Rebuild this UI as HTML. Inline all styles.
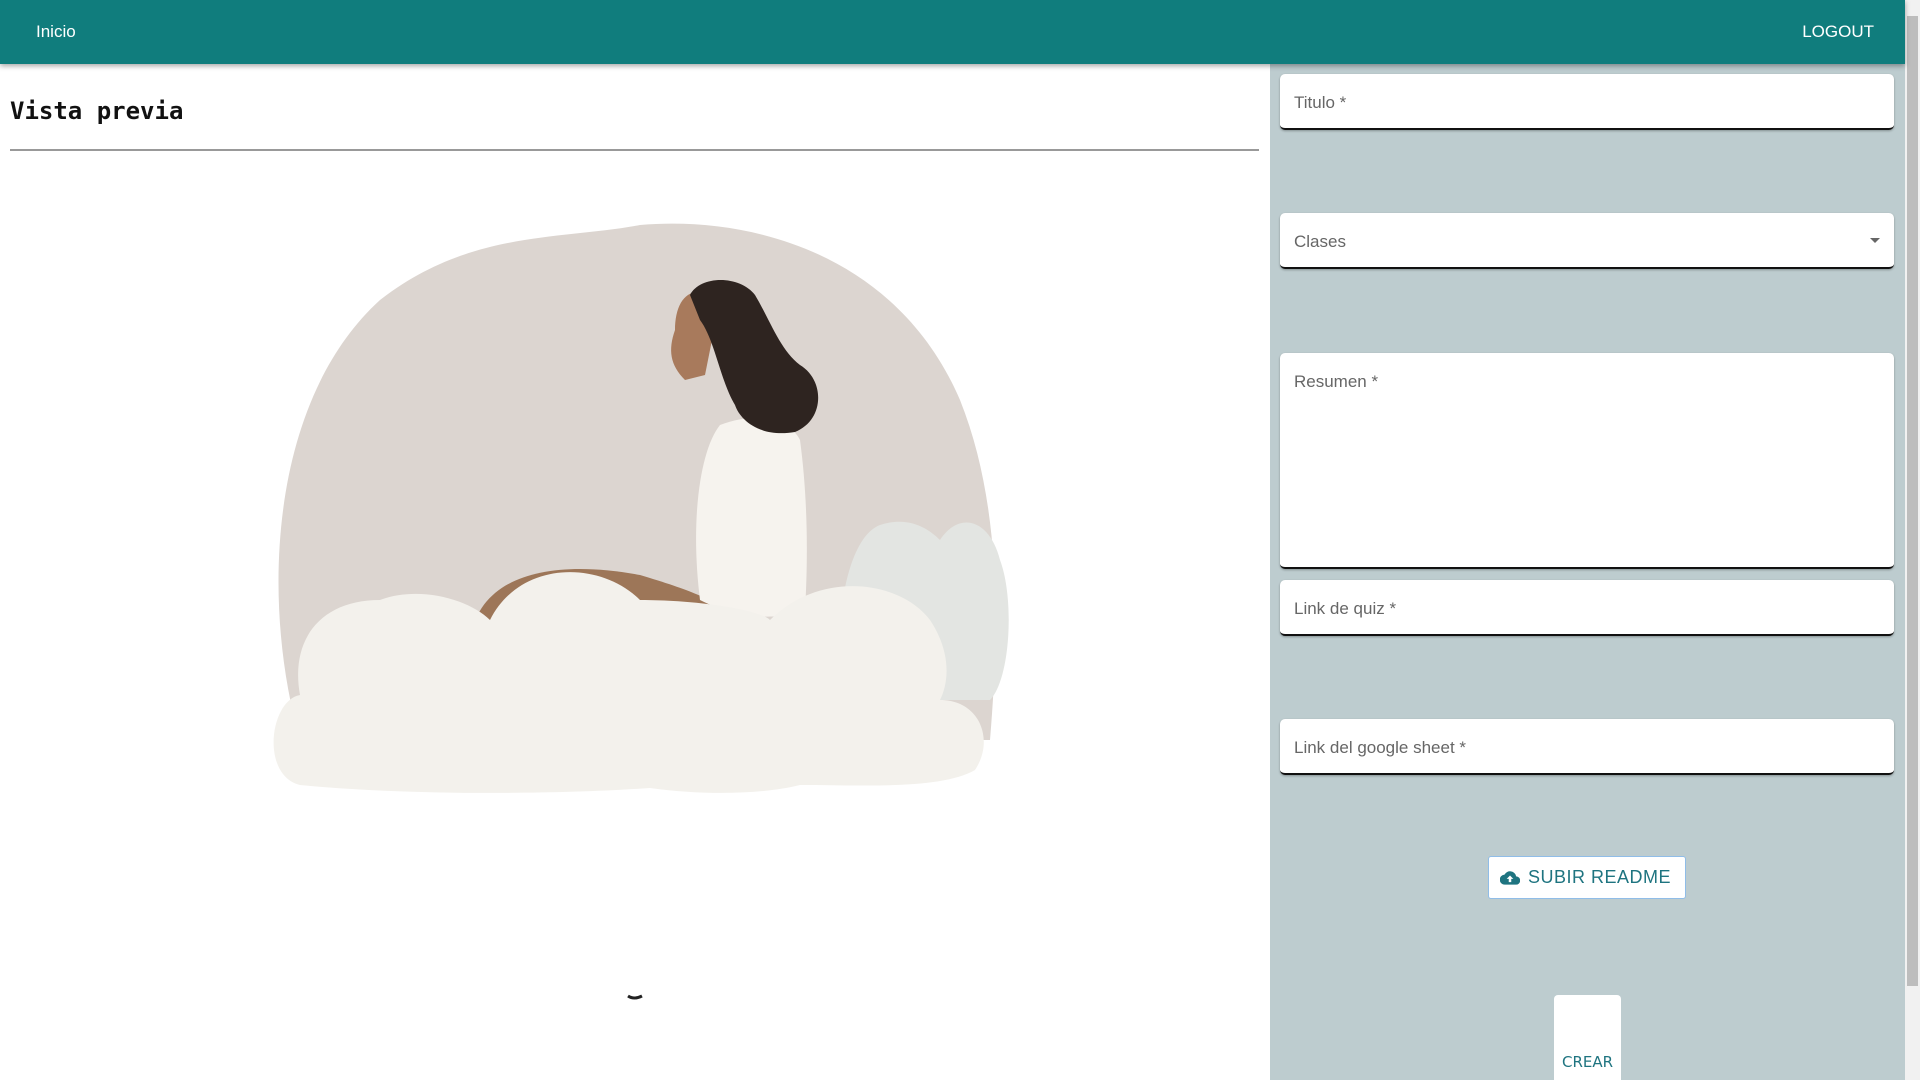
<!DOCTYPE html>
<html><head><meta charset="utf-8"><style>
*{box-sizing:border-box;margin:0;padding:0}
body{width:1920px;height:1080px;overflow:hidden;background:#fff;font-family:"Liberation Sans",sans-serif;position:relative}
.hdr{position:absolute;left:0;top:0;width:1905px;height:64px;background:#107d7d;box-shadow:0 2px 5px rgba(0,0,0,.35);z-index:2;color:#fff;font-size:17px}
.hdr .a{position:absolute;left:36px;top:22px}
.hdr .b{position:absolute;right:31px;top:22px}
.side{position:absolute;left:1270px;top:64px;width:635px;height:1016px;background:#bdcccf}
.sb{position:absolute;left:1905px;top:0;width:15px;height:1080px;background:#f1f1f1}
.sb .t{position:absolute;left:2px;top:16px;width:11px;height:970px;background:#bdbdbd}
.f{position:absolute;left:1280px;width:614px;background:#fff;border-radius:5px;border-bottom:2px solid #111;box-shadow:0 1px 2px rgba(0,0,0,.3);color:#666;font-size:17px;padding:0 14px}
h1{position:absolute;left:10px;top:97px;font-family:"DejaVu Sans Mono",monospace;font-size:24px;font-weight:bold;color:#111}
.hr{position:absolute;left:10px;top:149px;width:1249px;height:2px;background:#999}
.btn{position:absolute;left:1488px;top:856px;width:198px;height:43px;background:#fff;border:1px solid #90bde8;border-radius:3px;color:#1e7480;font-size:18px;letter-spacing:.5px}
.crear{position:absolute;left:1554px;top:995px;width:67px;height:85px;background:#fff;border-radius:4px 4px 0 0;color:#1e7480;text-align:center;padding-top:58px;font-family:"DejaVu Sans",sans-serif;font-size:15px}
</style></head><body>
<div class="hdr"><span class="a">Inicio</span><span class="b">LOGOUT</span></div>
<h1>Vista previa</h1>
<div class="hr"></div>
<svg style="position:absolute;left:0;top:0" width="1270" height="1080">
<path d="M300 740 C260 600 270 400 380 300 C470 230 560 240 640 225 C760 215 900 260 960 400 C1000 500 1000 620 990 740 Z" fill="#dcd5d0"/>
<path d="M850 700 C830 660 840 540 880 525 C910 515 930 530 940 540 C960 510 990 520 1000 560 C1015 600 1010 680 990 700 Z" fill="#e3e5e2"/>
<path d="M470 640 C480 570 560 560 640 575 C690 590 715 600 720 610 L700 640 Z" fill="#9d7658"/>
<path d="M700 600 C690 520 700 450 720 425 C760 410 790 420 800 440 C808 500 808 560 805 610 C780 620 740 620 700 600 Z" fill="#f6f3ee"/>
<path d="M720 300 C690 280 675 300 675 330 C668 350 670 365 685 380 L705 375 Z" fill="#a87a5c"/>
<path d="M690 295 C700 275 740 275 755 295 C770 320 780 350 800 365 C825 380 825 420 795 432 C760 438 740 420 735 405 C720 380 715 340 700 320 Z" fill="#2e2420"/>
<path d="M300 785 C260 775 270 700 300 695 C290 640 320 600 380 600 C420 585 470 600 490 620 C520 560 600 560 640 600 C700 600 760 610 770 620 C820 570 900 580 930 620 C950 650 950 680 940 700 C980 700 995 740 975 770 C940 790 860 785 800 785 C760 795 700 795 650 788 C550 795 400 795 300 785 Z" fill="#f3f1ec"/>
<path d="M628 996 q6 4 14 0" stroke="#222" stroke-width="3" fill="none"/>
</svg>
<div class="side"></div>
<div class="f" style="top:74px;height:56px;padding-top:19px">Titulo *</div>
<div class="f" style="top:213px;height:56px;padding-top:19px">Clases<span style="position:absolute;right:14px;top:25px;border:5px solid transparent;border-top:5px solid #666"></span></div>
<div class="f" style="top:353px;height:216px;padding-top:19px">Resumen *</div>
<div class="f" style="top:580px;height:56px;padding-top:19px">Link de quiz *</div>
<div class="f" style="top:719px;height:56px;padding-top:19px">Link del google sheet *</div>
<div class="btn"><svg style="position:absolute;left:11px;top:13px" width="20" height="16" viewBox="0 0 24 16"><path d="M19.4 6A7.5 7.5 0 0 0 5.4 4 6 6 0 0 0 6 16h13a5 5 0 0 0 .4-10z" fill="#1e7480"/><path d="M12 5l-4 4h2.5v4h3V9H16z" fill="#fff"/></svg><span style="position:absolute;left:39px;top:10px">SUBIR README</span></div>
<div class="crear">CREAR</div>
<div class="sb"><div class="t"></div></div>
</body></html>
